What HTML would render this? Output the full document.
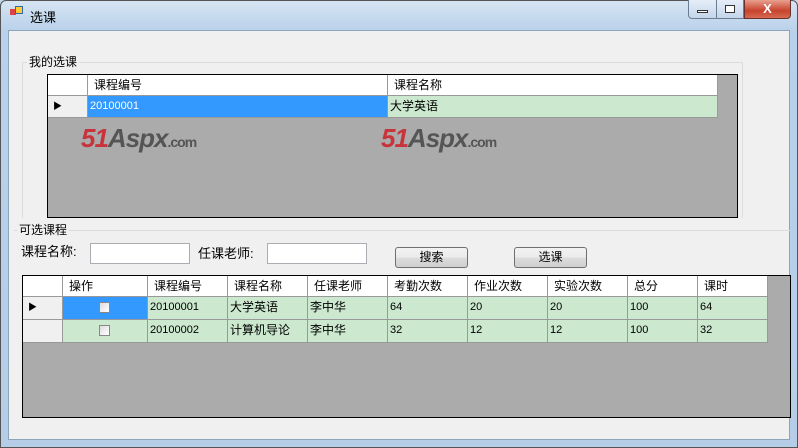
<!DOCTYPE html>
<html><head><meta charset="utf-8"><style>
*{margin:0;padding:0;box-sizing:border-box}
body{width:798px;height:448px;overflow:hidden;background:#c4d9ec;font-family:"Liberation Sans","Noto Sans CJK SC","WenQuanYi Zen Hei",sans-serif;font-size:12px;color:#000;position:relative}
.a{position:absolute}
.frame{left:0;top:0;width:798px;height:448px;background:linear-gradient(#d6e5f3,#b9d1ea 30px,#b5cde6);border:1px solid #555;border-radius:6px 6px 0 0}
.client{left:8px;top:30px;width:782px;height:410px;background:#f0f0f0;border:1px solid #8ea4bd}
.grid{background:#ababab;border:1px solid #000;overflow:hidden}
.c{position:absolute;border-right:1px solid #999;border-bottom:1px solid #999;padding-left:2px;white-space:nowrap;line-height:20px}
.h{background:#fff;font-size:12px;padding-left:6px}
.g{background:#cce8cf;font-size:11px}
.sel{background:#3399ff;color:#fff}
.rh{background:#f0f0f0}
.btn{border:1px solid #707070;border-radius:3px;background:linear-gradient(#f2f2f2,#ebebeb 50%,#dddddd 51%,#cfcfcf);text-align:center;line-height:19px}
.tb{background:#fff;border:1px solid #abadb3}
.cb{position:absolute;width:11px;height:11px;border:1px solid #888;background:linear-gradient(135deg,#ddd,#fff)}
.logo{font:italic bold 26px "Liberation Sans",sans-serif;color:#c8343c;letter-spacing:-1px}
.logo span{color:#555}.logo small{font-size:14px;color:#555;font-style:normal}
</style></head><body>
<div class="a frame"></div>
<div class="a" style="left:10px;top:9px;width:6px;height:6px;background:#d44"></div>
<div class="a" style="left:15px;top:6px;width:8px;height:8px;background:#fc3;border:1px solid #36a"></div>
<div class="a" style="left:30px;top:7px;font-size:13px">选课</div>
<div class="a" style="left:688px;top:0;width:36px;height:19px;border:1px solid #6a7d93;border-top:0;border-radius:0 0 0 4px;background:linear-gradient(#e5eef8,#c4d6ea)"></div>
<div class="a" style="left:697px;top:10px;width:11px;height:3px;border:1px solid #333;background:#fff"></div>
<div class="a" style="left:716px;top:0;width:28px;height:19px;border:1px solid #6a7d93;border-top:0;background:linear-gradient(#e5eef8,#c4d6ea)"></div>
<div class="a" style="left:725px;top:5px;width:10px;height:8px;border:1px solid #333;background:#fff"></div>
<div class="a" style="left:744px;top:0;width:47px;height:19px;border:1px solid #6a3030;border-top:0;border-radius:0 0 4px 0;background:linear-gradient(#e8a090,#c8432c 60%,#d66a50);color:#fff;font:bold 13px 'Liberation Sans';text-align:center;line-height:18px">X</div>
<div class="a client"></div>
<!-- group 1 -->
<div class="a" style="left:22px;top:62px;width:721px;height:156px;border:1px solid #dcdcdc;border-bottom:0"></div>
<div class="a" style="left:27px;top:53px;background:#f0f0f0;padding:0 2px">我的选课</div>
<div class="a grid" style="left:47px;top:74px;width:691px;height:144px">
<div class="c rh" style="left:0;top:0;width:40px;height:21px;background:#fff"></div>
<div class="c h" style="left:40px;top:0;width:300px;height:21px">课程编号</div>
<div class="c h" style="left:340px;top:0;width:330px;height:21px">课程名称</div>
<div class="c rh" style="left:0;top:21px;width:40px;height:22px;font-size:9px;padding-left:5px">▶</div>
<div class="c sel" style="left:40px;top:21px;width:300px;height:22px;font-size:11px">20100001</div>
<div class="c g" style="left:340px;top:21px;width:330px;height:22px;font-size:12px">大学英语</div>
<div class="a logo" style="left:33px;top:48px">51<span>Aspx</span><small>.com</small></div>
<div class="a logo" style="left:333px;top:48px">51<span>Aspx</span><small>.com</small></div>
</div>
<!-- group 2 -->
<div class="a" style="left:14px;top:230px;width:776px;height:1px;background:#dcdcdc"></div>
<div class="a" style="left:17px;top:221px;background:#f0f0f0;padding:0 2px">可选课程</div>
<div class="a" style="left:21px;top:241px;font-size:13px">课程名称:</div>
<div class="a tb" style="left:90px;top:243px;width:100px;height:21px"></div>
<div class="a" style="left:198px;top:243px;font-size:13px">任课老师:</div>
<div class="a tb" style="left:267px;top:243px;width:100px;height:21px"></div>
<div class="a btn" style="left:395px;top:247px;width:73px;height:21px">搜索</div>
<div class="a btn" style="left:514px;top:247px;width:73px;height:21px">选课</div>
<div class="a grid" style="left:22px;top:275px;width:769px;height:143px">
<div class="c rh" style="left:0;top:0;width:40px;height:21px;background:#fff"></div>
<div class="c h" style="left:40px;top:0;width:85px;height:21px">操作</div>
<div class="c h" style="left:125px;top:0;width:80px;height:21px">课程编号</div>
<div class="c h" style="left:205px;top:0;width:80px;height:21px">课程名称</div>
<div class="c h" style="left:285px;top:0;width:80px;height:21px">任课老师</div>
<div class="c h" style="left:365px;top:0;width:80px;height:21px">考勤次数</div>
<div class="c h" style="left:445px;top:0;width:80px;height:21px">作业次数</div>
<div class="c h" style="left:525px;top:0;width:80px;height:21px">实验次数</div>
<div class="c h" style="left:605px;top:0;width:70px;height:21px">总分</div>
<div class="c h" style="left:675px;top:0;width:70px;height:21px">课时</div>
<div class="c rh" style="left:0;top:21px;width:40px;height:23px;font-size:9px;padding-left:5px">▶</div>
<div class="c sel" style="left:40px;top:21px;width:85px;height:23px"><div class="cb" style="left:36px;top:5px"></div></div>
<div class="c g" style="left:125px;top:21px;width:80px;height:23px">20100001</div>
<div class="c g" style="left:205px;top:21px;width:80px;height:23px;font-size:12px">大学英语</div>
<div class="c g" style="left:285px;top:21px;width:80px;height:23px;font-size:12px">李中华</div>
<div class="c g" style="left:365px;top:21px;width:80px;height:23px">64</div>
<div class="c g" style="left:445px;top:21px;width:80px;height:23px">20</div>
<div class="c g" style="left:525px;top:21px;width:80px;height:23px">20</div>
<div class="c g" style="left:605px;top:21px;width:70px;height:23px">100</div>
<div class="c g" style="left:675px;top:21px;width:70px;height:23px">64</div>
<div class="c rh" style="left:0;top:44px;width:40px;height:23px"></div>
<div class="c g" style="left:40px;top:44px;width:85px;height:23px"><div class="cb" style="left:36px;top:5px"></div></div>
<div class="c g" style="left:125px;top:44px;width:80px;height:23px">20100002</div>
<div class="c g" style="left:205px;top:44px;width:80px;height:23px;font-size:12px">计算机导论</div>
<div class="c g" style="left:285px;top:44px;width:80px;height:23px;font-size:12px">李中华</div>
<div class="c g" style="left:365px;top:44px;width:80px;height:23px">32</div>
<div class="c g" style="left:445px;top:44px;width:80px;height:23px">12</div>
<div class="c g" style="left:525px;top:44px;width:80px;height:23px">12</div>
<div class="c g" style="left:605px;top:44px;width:70px;height:23px">100</div>
<div class="c g" style="left:675px;top:44px;width:70px;height:23px">32</div>
</div>
</body></html>
